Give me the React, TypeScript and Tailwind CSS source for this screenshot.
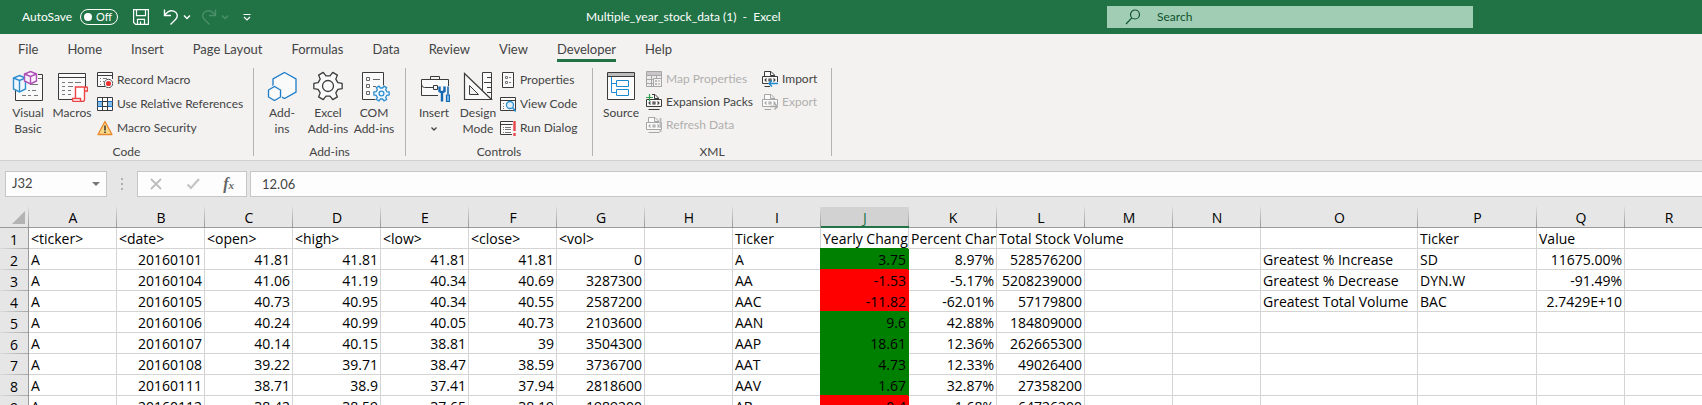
import React from "react";

type IconProps = { children: React.ReactNode; size: "lg" | "sm" };

function Glyph({ children, size }: IconProps) {
  return size === "lg" ? (
    <svg viewBox="0 0 32 32" className="size-8 shrink-0" fill="none" stroke="#3b3b3b" aria-hidden="true">
      {children}
    </svg>
  ) : (
    <svg viewBox="0 0 16 16" className="size-4 shrink-0" fill="none" stroke="#3b3b3b" aria-hidden="true">
      {children}
    </svg>
  );
}

const gear = (cx: number, cy: number, ro: number, ri: number, teeth: number) => {
  const pts: string[] = [];
  for (let i = 0; i < teeth; i++) {
    const a = (i * 2 * Math.PI) / teeth - Math.PI / 2 + Math.PI / teeth;
    const s = Math.PI / teeth;
    const spots: [number, number][] = [
      [ri, -s * 0.62],
      [ro, -s * 0.36],
      [ro, s * 0.36],
      [ri, s * 0.62],
    ];
    for (const [r, d] of spots) {
      pts.push(`${(cx + r * Math.cos(a + d)).toFixed(2)} ${(cy + r * Math.sin(a + d)).toFixed(2)}`);
    }
  }
  return `M${pts.join("L")}Z`;
};

const VisualBasicIcon = () => (
  <Glyph size="lg">
    <path d="M3.500 10V30.500H30.500V4.500H26" fill="#fafafa" />
    <path d="M26 8.500h4M18 14.500h8M20 20.500h4M10 25.500h4M16 25.500h3M22 25.500h4M16 20.500h2" stroke="#777" />
    <path d="M7.500 5.500l6 2.500v11l-6 3-6-3V8z" fill="#f0f7fc" stroke="#2e8fd0" strokeWidth="1.400" />
    <path d="M1.500 8l6 2.500 6-2.500M7.500 10.500V22" stroke="#2e8fd0" strokeWidth="1.400" />
    <path d="M18.500 1.500l6 2.500v7l-6 3-6-3V4z" fill="#f8f0fa" stroke="#b14fb8" strokeWidth="1.400" />
    <path d="M12.500 4l6 2.500 6-2.500M18.500 6.500V14" stroke="#b14fb8" strokeWidth="1.400" />
  </Glyph>
);

const MacrosIcon = () => (
  <Glyph size="lg">
    <path d="M2.500 3.500h27v26h-27z" fill="#fafafa" />
    <path d="M2.500 7.500h27" />
    <path d="M6 12.500h3M12 12.500h5M19 12.500h6M6 16.500h3M12 16.500h5M6 20.500h3M12 20.500h3M6 24.500h3M12 24.500h3" stroke="#777" />
    <path d="M20 17h12v15H16z" fill="#f3f2f1" stroke="none" />
    <path d="M19.500 28V17h10.500q1.500 0 1.500 1.500V21h-3v8.500q0 2-2 2H18q-1.500 0-1.500-1.500v-1.500h8V30q0 1.500 1.500 1.500M28.500 21v-2.500q0-1.500 1.500-1.500" fill="#fff" stroke="#ee4444" strokeWidth="1.400" />
  </Glyph>
);

const AddInsIcon = () => (
  <Glyph size="lg">
    <path d="M18.500 2.500l11.500 6.500v13L18.500 28.500 7 22V9z" fill="#fafafa" stroke="#1c7cc9" strokeWidth="1.300" />
    <path d="M8.500 16.500l6 3.500v7l-6 3.500-6-3.500v-7z" fill="#fafafa" stroke="#f3f2f1" strokeWidth="3" />
    <path d="M8.500 16.500l6 3.500v7l-6 3.500-6-3.500v-7z" fill="#fafafa" stroke="#1c7cc9" strokeWidth="1.300" />
  </Glyph>
);

const GearIcon = () => (
  <Glyph size="lg">
    <path d={gear(16, 16, 14.4, 10.4, 6)} fill="#fafafa" strokeWidth="1.300" strokeLinejoin="round" />
    <circle cx="16" cy="16" r="5.500" strokeWidth="1.300" />
  </Glyph>
);

const ComAddInsIcon = () => (
  <Glyph size="lg">
    <path d="M4.500 2.500h21v27h-21z" fill="#fafafa" />
    <path d="M8.500 7.500h3v3h-3zM8.500 14.500h3v3h-3zM8.500 21.500h3v3h-3zM15 9.500h7M15 16.500h3" stroke="#666" />
    <circle cx="23.500" cy="23.500" r="8.500" fill="#f3f2f1" stroke="none" />
    <path d={gear(23.5, 23.5, 7.8, 5.6, 6)} fill="#f0f8fd" stroke="#2e8fd0" strokeWidth="1.300" />
    <circle cx="23.500" cy="23.500" r="2.400" stroke="#2e8fd0" strokeWidth="1.300" />
  </Glyph>
);

const InsertIcon = () => (
  <Glyph size="lg">
    <path d="M12.500 9V6.500h9V9" />
    <path d="M3.500 9.500h27v16h-27z" fill="#fafafa" />
    <path d="M3.500 14q0 3.500 3 3.500h8.500M19 17.500h4M15.500 15.500h4v4h-4z" />
    <path d="M20 16h12v15H20z" fill="#f3f2f1" stroke="none" />
    <path d="M21.500 16.500v4.500l2.500 1.500L26.500 21v-4.500M24 22v9.500" stroke="#1569b3" strokeWidth="2.400" />
    <path d="M30 16.500v8" stroke="#1569b3" strokeWidth="1.600" />
    <path d="M28.500 25h3v6.500h-3z" fill="#83beec" stroke="#1569b3" strokeWidth="1.200" />
  </Glyph>
);

const DesignIcon = () => (
  <Glyph size="lg">
    <path d="M20.500 21V2.500h9v27h-1" fill="#fafafa" />
    <path d="M25 7.500h4.500M22 12.500h7.500M25 17.500h4.500M25 22.500h4.500" />
    <path d="M2.500 3.500l27 26h-27z" fill="#fafafa" strokeWidth="1.200" />
    <path d="M7.500 15.500l9 9h-9z" fill="#f3f2f1" />
  </Glyph>
);

const SourceIcon = () => (
  <Glyph size="lg">
    <path d="M2.500 2.500h27v27h-27z" fill="#fdfdfd" />
    <path d="M3 3h26v3H3z" fill="#bdbdbd" stroke="none" />
    <path d="M2.500 6.500h27" />
    <path d="M6.500 7v15.500h5M6.500 13.500h5M11.500 10.500h12v6h-12zM11.500 19.500h12v6h-12z" stroke="#1c8ad0" />
  </Glyph>
);

const RecordIcon = () => (
  <Glyph size="sm">
    <path d="M8 14.500H.5V.5h15V7M.5 3.500h15" fill="#fafafa" />
    <path d="M3 6.500h1M6 6.500h4M3 9.500h1M3 12.500h1M6 9.500h1" stroke="#777" />
    <circle cx="11.500" cy="11.500" r="4.200" fill="#fff" stroke="#555" />
    <circle cx="11.500" cy="11.500" r="2.600" fill="#ee2f2f" stroke="none" />
  </Glyph>
);

const RelativeIcon = () => (
  <Glyph size="sm">
    <path d="M0 1.500h16v13H0z" fill="#fff" stroke="none" />
    <path d="M0 5.500h5v5H0zM10.500 5.500H16v5h-5.500z" fill="#83beec" stroke="none" />
    <path d="M.5 1.500h15v13H.5zM.5 5.500h15M.5 10.500h15M5.500 1.500v13M10.500 1.500v13" />
    <path d="M0 5.500h5M0 10.500h5M11 5.500h5M11 10.500h5" stroke="#1569b3" />
  </Glyph>
);

const WarningIcon = () => (
  <Glyph size="sm">
    <path d="M8 1.500l7 13H1z" fill="#fbd88a" stroke="#e8892b" strokeWidth="1.300" strokeLinejoin="round" />
    <path d="M8 5.500v5M8 11.500v1.500" stroke="#333" strokeWidth="1.500" />
  </Glyph>
);

const PropertiesIcon = () => (
  <Glyph size="sm">
    <path d="M2.500.5h11v15h-11z" fill="#fafafa" />
    <path d="M5.500 4.500h2v2h-2zM5.500 9.500h2v2h-2zM9 5.500h2M9 10.500h2" stroke="#777" />
  </Glyph>
);

const ViewCodeIcon = () => (
  <Glyph size="sm">
    <path d="M.5 1.500h15v13H.5zM.5 4.500h15" fill="#fafafa" />
    <path d="M3 7.500h1M3 10.500h1M3 12.500h1M6 7.500h1" stroke="#777" />
    <circle cx="10" cy="9" r="3.500" fill="#dff0fb" stroke="#2e8fd0" strokeWidth="1.300" />
    <path d="M12.500 11.500l3.200 4" stroke="#2e8fd0" strokeWidth="1.600" />
  </Glyph>
);

const RunDialogIcon = () => (
  <Glyph size="sm">
    <path d="M12 14.500H.5V1.500H13M.5 4.500h12" fill="#fafafa" />
    <path d="M3 7.500h1M5 7.500h6M3 9.500h1M5 9.500h6M3 12.500h1M5 12.500h6" stroke="#777" />
    <path d="M14.500 1v10M14.500 13v3" stroke="#e8474c" strokeWidth="2.400" />
  </Glyph>
);

const MapPropertiesIcon = () => (
  <Glyph size="sm">
    <path d="M.5.5h15v15H.5z" fill="#ededed" stroke="#a6a6a6" />
    <path d="M1 1h14v3H1z" fill="#c9c5c9" stroke="none" />
    <path d="M.5 4.500h15M.5 8.500h7M.5 12.500h7M5.500 4.500v11M10.500 4.500v3" stroke="#a6a6a6" />
    <path d="M7.500 7.500h8v8h-8z" fill="#f3f2f1" stroke="#a6a6a6" />
    <path d="M9.500 9.500h1v1h-1zM9.500 12.500h1v1h-1zM12 10h2M12 13h2" stroke="#a6a6a6" />
  </Glyph>
);

type PageTone = { tone: string; children?: React.ReactNode };

const XmlPage = ({ tone, children }: PageTone) => (
  <Glyph size="sm">
    <g stroke={tone}>
      <path d="M2.500 5V.5H9L12.500 4v1M8.500.5v4h4" fill="#fafafa" />
      <path d="M.5 5.500h15v7H.5z" fill="#fafafa" />
      <path d="M2.500 15.500h11" />
      <path d="M4.500 7.500L3 9l1.500 1.500M11.500 7.500L13 9l-1.500 1.500M7 8h2v2H7z" strokeWidth="1.100" />
    </g>
    {children}
  </Glyph>
);

const ExpansionIcon = () => (
  <XmlPage tone="#3b3b3b">
    <path d="M0 0h6v5H0z" fill="#f3f2f1" stroke="none" />
    <path d="M3.500 0v7M0 3.500h7" stroke="#2fa04b" strokeWidth="1.200" />
  </XmlPage>
);

const RefreshIcon = () => (
  <XmlPage tone="#a6a6a6">
    <path d="M14.500 1v10M14.500 13v2" stroke="#bcbcbc" strokeWidth="2" />
  </XmlPage>
);

const ImportIcon = () => (
  <XmlPage tone="#3b3b3b">
    <path d="M8 11h8v5H8z" fill="#f3f2f1" stroke="none" />
    <path d="M16 12.500H7M10 9.500l-3 3 3 3" stroke="#1c8ad0" strokeWidth="1.400" />
  </XmlPage>
);

const ExportIcon = () => (
  <XmlPage tone="#a6a6a6">
    <path d="M9 11h7v5H9z" fill="#f3f2f1" stroke="none" />
    <path d="M8 12.500h7M12.500 9.500l3 3-3 3" stroke="#a6a6a6" strokeWidth="1.300" />
  </XmlPage>
);

type BigButtonProps = { icon: React.ReactNode; lines: string[]; menu?: boolean };

function BigButton({ icon, lines, menu }: BigButtonProps) {
  return (
    <button type="button" className="flex w-11 flex-col items-center gap-[3px] whitespace-nowrap">
      {icon}
      <span className="flex flex-col items-center leading-4">
        {lines.map((line) => (
          <span key={line}>{line}</span>
        ))}
        {menu && (
          <svg viewBox="0 0 8 16" className="h-4 w-2" fill="none" stroke="#444" strokeWidth="1.300" aria-hidden="true">
            <path d="M1.500 6.500L4 9l2.500-2.500" />
          </svg>
        )}
      </span>
    </button>
  );
}

type SmallButtonProps = { icon: React.ReactNode; label: string; disabled?: boolean };

function SmallButton({ icon, label, disabled }: SmallButtonProps) {
  return (
    <button
      type="button"
      disabled={disabled}
      className="flex items-center gap-1 whitespace-nowrap leading-4 disabled:text-[#b1afad]"
    >
      {icon}
      {label}
    </button>
  );
}

type GroupProps = { label: string; width: string; children: React.ReactNode };

function Group({ label, width, children }: GroupProps) {
  return (
    <>
      <section aria-label={label} className={`flex shrink-0 flex-col justify-between ${width}`}>
        <div className="flex items-start pt-0.5 pl-1.5">{children}</div>
        <h2 className="text-center leading-4">{label}</h2>
      </section>
      <div className="h-22 w-px shrink-0 bg-[#b5b3b1]" />
    </>
  );
}

const tabs = ["File", "Home", "Insert", "Page Layout", "Formulas", "Data", "Review", "View", "Developer", "Help"];

const columns: [string, string][] = [
  ["A", "w-[88px]"],
  ["B", "w-[88px]"],
  ["C", "w-[88px]"],
  ["D", "w-[88px]"],
  ["E", "w-[88px]"],
  ["F", "w-[88px]"],
  ["G", "w-[88px]"],
  ["H", "w-[88px]"],
  ["I", "w-[88px]"],
  ["J", "w-[88px]"],
  ["K", "w-[88px]"],
  ["L", "w-[88px]"],
  ["M", "w-[88px]"],
  ["N", "w-[88px]"],
  ["O", "w-[157px]"],
  ["P", "w-[119px]"],
  ["Q", "w-[88px]"],
  ["R", "w-[88px]"],
];

const rows: string[][] = [
  ["<ticker>", "<date>", "<open>", "<high>", "<low>", "<close>", "<vol>", "", "Ticker", "Yearly Change", "Percent Change", "Total Stock Volume", "", "", "", "Ticker", "Value", ""],
  ["A", "20160101", "41.81", "41.81", "41.81", "41.81", "0", "", "A", "3.75", "8.97%", "528576200", "", "", "Greatest % Increase", "SD", "11675.00%", ""],
  ["A", "20160104", "41.06", "41.19", "40.34", "40.69", "3287300", "", "AA", "-1.53", "-5.17%", "5208239000", "", "", "Greatest % Decrease", "DYN.W", "-91.49%", ""],
  ["A", "20160105", "40.73", "40.95", "40.34", "40.55", "2587200", "", "AAC", "-11.82", "-62.01%", "57179800", "", "", "Greatest Total Volume", "BAC", "2.7429E+10", ""],
  ["A", "20160106", "40.24", "40.99", "40.05", "40.73", "2103600", "", "AAN", "9.6", "42.88%", "184809000", "", "", "", "", "", ""],
  ["A", "20160107", "40.14", "40.15", "38.81", "39", "3504300", "", "AAP", "18.61", "12.36%", "262665300", "", "", "", "", "", ""],
  ["A", "20160108", "39.22", "39.71", "38.47", "38.59", "3736700", "", "AAT", "4.73", "12.33%", "49026400", "", "", "", "", "", ""],
  ["A", "20160111", "38.71", "38.9", "37.41", "37.94", "2818600", "", "AAV", "1.67", "32.87%", "27358200", "", "", "", "", "", ""],
  ["A", "20160112", "38.42", "38.59", "37.65", "38.19", "1989200", "", "AB", "-0.4", "-1.68%", "64726200", "", "", "", "", "", ""],
];

const CHANGE = 9;
const SPILL = 11;

function cellTone(row: number, col: number, value: string) {
  if (row > 0 && col === CHANGE) {
    return value.startsWith("-")
      ? "bg-[#ff0000] border-[#ff0000] shadow-[-1px_-1px_0_#ff0000]"
      : "bg-[#008000] border-[#008000] shadow-[-1px_-1px_0_#008000]";
  }
  if (row === 0 && col === SPILL) return "border-b-[#d4d4d4] border-r-transparent";
  return "border-[#d4d4d4]";
}

function Cell({ row, col, value }: { row: number; col: number; value: string }) {
  const numeric = /^-?\d/.test(value);
  const spill = row === 0 && col === SPILL;
  return (
    <td
      className={`h-[21px] border-r border-b px-0.5 pt-0.5 pb-0 whitespace-nowrap ${numeric ? "text-right" : "text-left"} ${
        spill ? "overflow-visible" : "overflow-hidden"
      } ${cellTone(row, col, value)}`}
    >
      {value}
    </td>
  );
}

function Chevron() {
  return (
    <svg viewBox="0 0 8 8" className="size-2" fill="none" stroke="currentColor" strokeWidth="1.400" aria-hidden="true">
      <path d="M1 2.500l3 3 3-3" />
    </svg>
  );
}

function TitleBar() {
  return (
    <header className="grid h-[34px] shrink-0 grid-cols-[586fr_521fr_366fr_229fr] items-center bg-[#217346] text-xs text-white">
      <div className="flex items-center pl-[22px] whitespace-nowrap">
        <span id="autosave" className="w-[58px]">AutoSave</span>
        <button
          type="button"
          role="switch"
          aria-checked="false"
          aria-labelledby="autosave"
          className="flex h-4 w-[38px] items-center justify-between rounded-full border border-white pr-[5px] pl-[3px] text-[11px] leading-3"
        >
          <span className="size-2 rounded-full bg-white" />
          Off
        </button>
        <button type="button" aria-label="Save" className="ml-[15px]">
          <svg viewBox="0 0 16 16" className="size-4" fill="none" stroke="#fff" strokeWidth="1.200">
            <path d="M.6.600h14.800v14.800H2.600l-2-2zM3.500.6v6h9v-6M4.500 15.400v-5h7v5M7.500 15v-2.500" />
          </svg>
        </button>
        <button type="button" aria-label="Undo" className="ml-3.5">
          <svg viewBox="0 0 16 16" className="size-4" fill="none" stroke="#fff" strokeWidth="1.400">
            <path d="M1.500.5v6H8M1.800 6.200C4 3 7.500 1 10.800 2.200c4 1.600 4.500 5.500 1.700 8.300L7.500 15.500" />
          </svg>
        </button>
        <button type="button" aria-label="Undo history" className="ml-1"><Chevron /></button>
        <button type="button" aria-label="Redo" disabled className="ml-2.5 text-[#4c9069]">
          <svg viewBox="0 0 16 16" className="size-4" fill="none" stroke="currentColor" strokeWidth="1.400">
            <path d="M14.500.5v6H8M14.200 6.200C12 3 8.500 1 5.200 2.200c-4 1.600-4.500 5.500-1.700 8.300L8.500 15.500" />
          </svg>
        </button>
        <button type="button" aria-label="Redo history" disabled className="ml-1 text-[#4c9069]"><Chevron /></button>
        <button type="button" aria-label="Customize toolbar" className="ml-3.5">
          <svg viewBox="0 0 8 8" className="size-2" fill="none" stroke="#fff" strokeWidth="1.200">
            <path d="M.5 1.500h7M1 4l3 3 3-3" />
          </svg>
        </button>
      </div>
      <h1 className="whitespace-pre">Multiple_year_stock_data (1)  -  Excel</h1>
      <label className="flex h-[22px] items-center bg-[#a0cdb4] pl-[18px] text-[#0f5230]">
        <svg viewBox="0 0 16 16" className="mr-4 size-4 shrink-0" fill="none" stroke="currentColor" strokeWidth="1.200" aria-hidden="true">
          <circle cx="10" cy="5.500" r="4.500" />
          <path d="M6.800 8.800L1 15" />
        </svg>
        <input type="text" aria-label="Search" placeholder="Search" className="w-full min-w-0 bg-transparent outline-none placeholder:text-[#0f5230]" />
      </label>
    </header>
  );
}

function Tabs() {
  return (
    <nav className="flex h-[34px] shrink-0 items-start gap-[29px] pl-[18px] text-[13px]">
      {tabs.map((tab) => (
        <button
          key={tab}
          type="button"
          className={`h-7 border-b-3 pt-[5px] leading-5 whitespace-nowrap ${tab === "Developer" ? "border-[#217346]" : "border-transparent"}`}
        >
          {tab}
        </button>
      ))}
    </nav>
  );
}

function Ribbon() {
  return (
    <div className="flex h-[93px] shrink-0 border-b border-[#d0cfce] text-xs">
      <Group label="Code" width="w-[253px]">
        <BigButton icon={<VisualBasicIcon />} lines={["Visual", "Basic"]} />
        <BigButton icon={<MacrosIcon />} lines={["Macros"]} />
        <div className="ml-[3px] flex flex-col gap-2 pt-0.5">
          <SmallButton icon={<RecordIcon />} label="Record Macro" />
          <SmallButton icon={<RelativeIcon />} label="Use Relative References" />
          <SmallButton icon={<WarningIcon />} label="Macro Security" />
        </div>
      </Group>
      <Group label="Add-ins" width="w-[151px]">
        <div className="flex gap-0.5">
          <BigButton icon={<AddInsIcon />} lines={["Add-", "ins"]} />
          <BigButton icon={<GearIcon />} lines={["Excel", "Add-ins"]} />
          <BigButton icon={<ComAddInsIcon />} lines={["COM", "Add-ins"]} />
        </div>
      </Group>
      <Group label="Controls" width="w-[186px]">
        <BigButton icon={<InsertIcon />} lines={["Insert"]} menu />
        <BigButton icon={<DesignIcon />} lines={["Design", "Mode"]} />
        <div className="flex flex-col gap-2 pt-0.5">
          <SmallButton icon={<PropertiesIcon />} label="Properties" />
          <SmallButton icon={<ViewCodeIcon />} label="View Code" />
          <SmallButton icon={<RunDialogIcon />} label="Run Dialog" />
        </div>
      </Group>
      <Group label="XML" width="w-[238px]">
        <BigButton icon={<SourceIcon />} lines={["Source"]} />
        <div className="grid grid-cols-[116px_auto] gap-y-[7px] pt-px pl-[3px]">
          <SmallButton icon={<MapPropertiesIcon />} label="Map Properties" disabled />
          <SmallButton icon={<ImportIcon />} label="Import" />
          <SmallButton icon={<ExpansionIcon />} label="Expansion Packs" />
          <SmallButton icon={<ExportIcon />} label="Export" disabled />
          <SmallButton icon={<RefreshIcon />} label="Refresh Data" disabled />
        </div>
      </Group>
    </div>
  );
}

function FormulaBar() {
  return (
    <div className="flex shrink-0 bg-[#e6e6e6] py-2.5 pl-[5px] text-[13px]">
      <div className="flex h-[26px] w-[102px] items-center border border-[#c6c6c6] bg-[#fdfdfd] pr-1.5 pl-1.5">
        <input type="text" aria-label="Name box" defaultValue="J32" className="w-full min-w-0 bg-transparent outline-none" />
        <button type="button" aria-label="Show names">
          <svg viewBox="0 0 8 4" className="h-1 w-2" fill="#777" aria-hidden="true">
            <path d="M0 0h8L4 4z" />
          </svg>
        </button>
      </div>
      <div className="flex w-[30px] flex-col items-center justify-center gap-[3px]">
        <span className="size-0.5 bg-[#b0b0b0]" />
        <span className="size-0.5 bg-[#b0b0b0]" />
        <span className="size-0.5 bg-[#b0b0b0]" />
      </div>
      <div className="flex h-[26px] w-[110px] items-center justify-between border border-[#c6c6c6] bg-[#fdfdfd] px-3">
        <button type="button" aria-label="Cancel">
          <svg viewBox="0 0 12 12" className="size-3" fill="none" stroke="#bdbdbd" strokeWidth="1.800">
            <path d="M1 1l10 10M11 1L1 11" />
          </svg>
        </button>
        <button type="button" aria-label="Enter">
          <svg viewBox="0 0 14 12" className="h-3 w-3.5" fill="none" stroke="#c4c4c4" strokeWidth="2.200">
            <path d="M1.500 6.500l3.500 3.500 8-9" />
          </svg>
        </button>
        <button type="button" className="font-['Liberation_Serif',serif] text-base leading-4 font-bold text-[#666] italic">
          f<span className="text-[11px]">x</span>
        </button>
      </div>
      <input
        type="text"
        aria-label="Formula"
        defaultValue="12.06"
        className="ml-[3px] h-[26px] min-w-0 flex-1 border-y border-l border-[#c6c6c6] bg-[#fdfdfd] pl-[11px] outline-none"
      />
    </div>
  );
}

const headLine = "bg-[linear-gradient(to_bottom,#dcdcdc,#999999)] bg-[length:1px_100%] bg-right bg-no-repeat";
const rowLine = "bg-[linear-gradient(to_right,#dcdcdc,#a6a6a6)] bg-[length:100%_1px] bg-bottom bg-no-repeat";

function Sheet() {
  return (
    <main className="min-h-0 flex-1 overflow-hidden bg-white font-['Open_Sans','Noto_Sans',sans-serif] text-black">
      <table className="w-[1713px] table-fixed border-separate border-spacing-0 text-sm leading-[18px]">
        <colgroup>
          <col className="w-[29px]" />
          {columns.map(([name, width]) => (
            <col key={name} className={width} />
          ))}
        </colgroup>
        <thead>
          <tr>
            <th className={`h-[21px] border-b border-[#999999] bg-[#e6e6e6] p-0 ${headLine}`} aria-label="Select all">
              <svg viewBox="0 0 13 13" className="ml-3 size-[13px]" fill="#b3b3b3" aria-hidden="true">
                <path d="M13 0v13H0z" />
              </svg>
            </th>
            {columns.map(([name], i) => (
              <th
                key={name}
                scope="col"
                className={`h-[21px] px-0 pt-0.5 pb-0 font-normal ${headLine} ${
                  i === CHANGE
                    ? "border-b-2 border-[#217346] bg-[#d2d2d2] leading-[17px] text-[#217346]"
                    : "border-b border-[#999999] bg-[#e6e6e6]"
                }`}
              >
                {name}
              </th>
            ))}
          </tr>
        </thead>
        <tbody>
          {rows.map((row, r) => (
            <tr key={r}>
              <th scope="row" className={`h-[21px] border-r border-[#999999] bg-[#e6e6e6] px-0 pt-0.5 pb-0 font-normal ${rowLine}`}>
                {r + 1}
              </th>
              {row.map((value, c) => (
                <Cell key={c} row={r} col={c} value={value} />
              ))}
            </tr>
          ))}
        </tbody>
      </table>
    </main>
  );
}

export default function App() {
  return (
    <div className="flex h-screen flex-col overflow-hidden bg-[#f3f2f1] font-['Lato','Open_Sans',sans-serif] text-[#444444]">
      <TitleBar />
      <Tabs />
      <Ribbon />
      <FormulaBar />
      <Sheet />
    </div>
  );
}
